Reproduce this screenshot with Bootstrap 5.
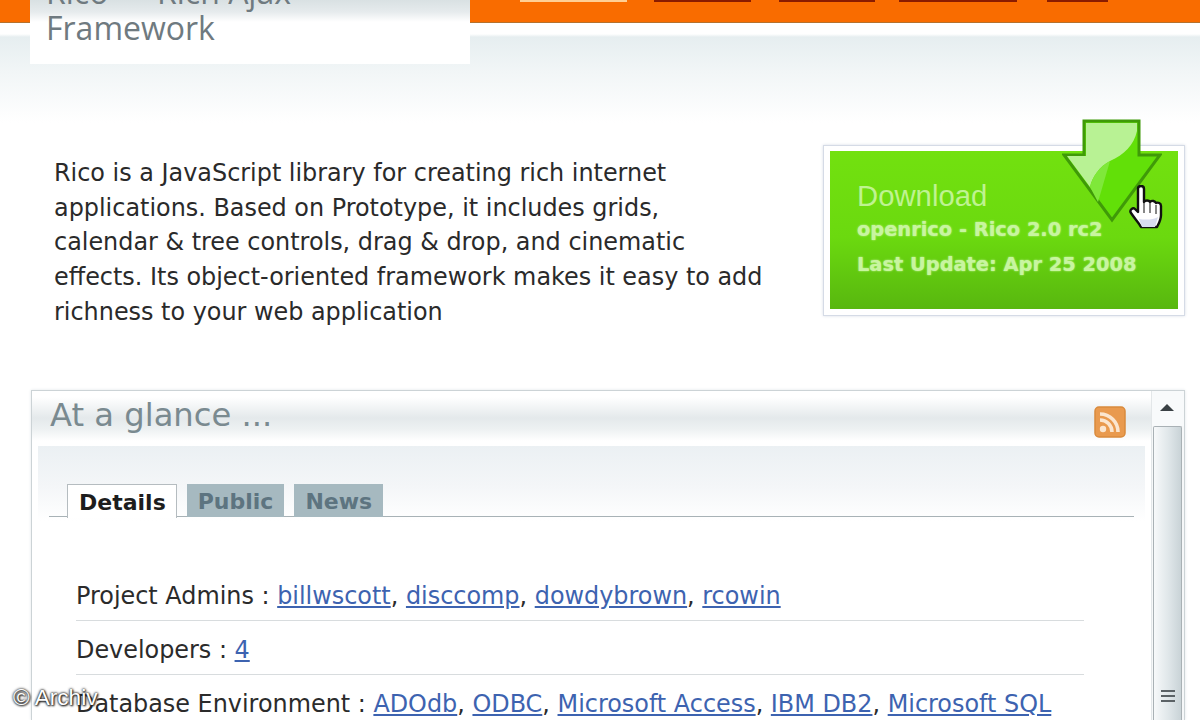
<!DOCTYPE html>
<html lang="en">
<head>
<meta charset="utf-8">
<title>Rico</title>
<link rel="stylesheet" href="https://cdn.jsdelivr.net/npm/bootstrap@5.3.0/dist/css/bootstrap.min.css">
<style>
html,body{height:720px;overflow:hidden}
body{background:#fff;font-family:"DejaVu Sans",sans-serif;color:#2b2b2b;position:relative;width:1200px}
.topstrip{height:23px;background:#f96c00;border-bottom:1px solid #b5722e;overflow:hidden}
.toplink{display:block;height:2px;background:#8a1c00}
.toplink.on{background:#ffcf94}
.tl1{margin-left:520px;width:107px}.tl2{margin-left:27px;width:97px}.tl3{margin-left:28px;width:96px}.tl4{margin-left:24px;width:118px}.tl5{margin-left:30px;width:61px}
.logobox{position:absolute;left:30px;top:0;width:440px;height:64px;background:linear-gradient(#d9e1e3 0,#e6ebed 12px,#fff 22px);overflow:hidden;z-index:2;padding-left:16px;font-family:"Open Sans",sans-serif;font-size:32px;line-height:36px;color:#6f7a80}
.logoinner{margin-top:-26px}
.pagewrap{height:697px;background:linear-gradient(#fff 0,#fff 11px,#e6eef0 14px,#f2f6f7 50px,#fff 100px);padding:97px 15px 0 31px}
.intro{height:270px}
.introtext{padding:36px 0 0 23px;font-size:23.9px;line-height:34.7px;color:#2a2a2a;white-space:nowrap}
.dlbox{position:relative;width:362px;height:171px;margin-top:25px;padding:5px 6px;background:#fff;border:1px solid #d5dbe6;box-shadow:0 0 3px #d8dee6}
.dlgreen{height:158px;background:linear-gradient(#72e10f 0,#6bd90f 55%,#58b70f 100%);padding:28px 0 0 27px;color:#bff391}
.dltitle{font-family:"Liberation Sans",sans-serif;font-size:29.3px;line-height:34px}
.dlsub{font-weight:700;font-size:19.4px;line-height:34.5px;color:#c8f5a0;text-shadow:0 0 2px #c8f5a0;white-space:nowrap}
.dlarrow{position:absolute;left:238px;top:-27px;width:100px;height:104px}
.dlhand{position:absolute;left:304px;top:39px;width:36px;height:46px}
.glance{height:330px;background:#fff;border:1px solid #ccd3d6;border-bottom:0;box-shadow:0 0 3px #e2e7ea}
.glancemain{padding:0 6px;width:1120px}
.glancehead{height:55px;margin:0 -6px;padding:4px 18px 0;background:linear-gradient(#fff 0,#fff 6px,#e4e9eb 27px,#edf1f2 38px,#fff 50px);position:relative}
.glancetitle{font-size:32.2px;line-height:41px;color:#7a8a90;margin:0;font-weight:400}
.rssicon{position:absolute;left:1062px;top:15px;width:32px;height:32px}
.glancebody{height:275px;background:linear-gradient(#ebf0f3 0,#f4f6f8 40px,#fff 75px);padding:38px 11px 0 11px;width:1107px}
.tabbar{border-bottom:1px solid #a8b2b6;padding-left:18px;gap:10px;height:33px}
.tabbar .nav-link{height:33px;padding:0 11px;border:0;border-radius:0;background:#a6b9c0;color:#5d7480;font-weight:700;font-size:22px;line-height:36px;margin:0}
.tabbar .nav-link.active{background:#fff;color:#1d1d1d;border:1px solid #b5bcc0;border-bottom:0;height:34px;line-height:35px;padding:0 10px 0 11px}
.rowlist{margin:50px 50px 0 27px;background:transparent}
.rowlist .list-group-item{background:transparent;padding:0;border-color:#d8dcde;height:54px;line-height:58px;font-size:23.9px;color:#2b2b2b;white-space:nowrap}
.rowlist a{color:#3d63b0}
.sbar{width:33px;background:#f6f8f9;border-left:1px solid #e3e7e9;margin-left:auto}
.sbtn{height:35px;background:#f8fafb;padding:13px 0 0 8px}
.sarrow{display:block;width:14px;height:7px}
.sthumb{height:300px;margin-left:1px;width:29px;background:linear-gradient(90deg,#f7f9fa,#dfe6e9 55%,#c9d3d7);border:1px solid #a9b1b5;border-bottom:0;border-radius:2px 2px 0 0;text-align:center;padding-top:263px}
.sgrip{display:block;width:14px;height:2px;background:#5b6266;margin:0 auto 3px}
.wmark{position:absolute;left:13px;top:684px;font-family:"Liberation Sans",sans-serif;font-size:22.6px;line-height:28px;color:#fff;text-shadow:0 0 3px #222,0 0 2px #222,1px 1px 2px #222;z-index:3}
</style>
</head>
<body>
<nav class="topstrip d-flex">
  <a class="toplink on tl1" href="#" aria-label="Menu 1"></a>
  <a class="toplink tl2" href="#" aria-label="Menu 2"></a>
  <a class="toplink tl3" href="#" aria-label="Menu 3"></a>
  <a class="toplink tl4" href="#" aria-label="Menu 4"></a>
  <a class="toplink tl5" href="#" aria-label="Menu 5"></a>
</nav>
<div class="logobox"><div class="logoinner">Rico — Rich Ajax<br>Framework</div></div>
<div class="pagewrap">
  <div class="intro d-flex justify-content-between">
    <div class="introtext">Rico is a JavaScript library for creating rich internet<br>applications. Based on Prototype, it includes grids,<br>calendar &amp; tree controls, drag &amp; drop, and cinematic<br>effects. Its object-oriented framework makes it easy to add<br>richness to your web application</div>
    <div class="dlbox">
      <div class="dlgreen">
        <div class="dltitle">Download</div>
        <div class="dlsub">openrico - Rico 2.0 rc2</div>
        <div class="dlsub">Last Update: Apr 25 2008</div>
      </div>
      <svg class="dlarrow" viewBox="0 0 100 104">
        <path d="M22 2H77V36H98L50 101 2 36H22Z" fill="#62e008" stroke="#3f9a08" stroke-width="3"/>
        <path d="M24 4H75V12C72 26 62 36 48 42 38 47 30 58 28 68L5 37H24Z" fill="#b8f294"/>
        <path d="M28 68C30 58 38 47 48 42L36 83Z" fill="#7fe83a"/>
      </svg>
      <svg class="dlhand" viewBox="0 0 36 46">
        <path d="M10 4c0-4 6-4 6 0v13c1-2 5-2 6 0 2-2 5-1 6 1 2-1 5 0 5 3v9c0 5-2 8-4 12H13c-2-4-6-8-10-14-2-3 2-6 4-4l3 3Z" fill="#fff" stroke="#111" stroke-width="2.4" stroke-linejoin="round"/>
        <path d="M16 18v10M22 18v10M28 20v9" stroke="#555" stroke-width="1.4" fill="none"/>
        <path d="M14 42h13l3-10c-5 3-12 3-19 2Z" fill="#d8dcf0"/>
      </svg>
    </div>
  </div>
  <section class="glance d-flex">
    <div class="glancemain">
      <div class="glancehead">
        <h2 class="glancetitle">At a glance ...</h2>
        <svg class="rssicon" viewBox="0 0 32 32">
          <rect x="1" y="1" width="30" height="30" rx="4" fill="#e99a4e" stroke="#d98a3c" stroke-width="1.5"/>
          <circle cx="9" cy="23" r="3.2" fill="#fbe6cf"/>
          <path d="M6 14a12 12 0 0 1 12 12M6 8a18 18 0 0 1 18 18" fill="none" stroke="#fbe6cf" stroke-width="3.6"/>
        </svg>
      </div>
      <div class="glancebody">
        <ul class="nav nav-tabs tabbar">
          <li class="nav-item"><a class="nav-link active" href="#">Details</a></li>
          <li class="nav-item"><a class="nav-link" href="#">Public</a></li>
          <li class="nav-item"><a class="nav-link" href="#">News</a></li>
        </ul>
        <ul class="list-group list-group-flush rowlist">
          <li class="list-group-item">Project Admins : <a href="#">billwscott</a>, <a href="#">disccomp</a>, <a href="#">dowdybrown</a>, <a href="#">rcowin</a></li>
          <li class="list-group-item">Developers : <a href="#">4</a></li>
          <li class="list-group-item">Database Environment : <a href="#">ADOdb</a>, <a href="#">ODBC</a>, <a href="#">Microsoft Access</a>, <a href="#">IBM DB2</a>, <a href="#">Microsoft SQL</a></li>
        </ul>
      </div>
    </div>
    <div class="sbar">
      <div class="sbtn"><svg class="sarrow" viewBox="0 0 14 7"><path d="M7 0 14 7H0Z" fill="#3a4145"/></svg></div>
      <div class="sthumb"><span class="sgrip"></span><span class="sgrip"></span><span class="sgrip"></span></div>
    </div>
  </section>
</div>
<div class="wmark">© Archiv</div>
</body>
</html>
